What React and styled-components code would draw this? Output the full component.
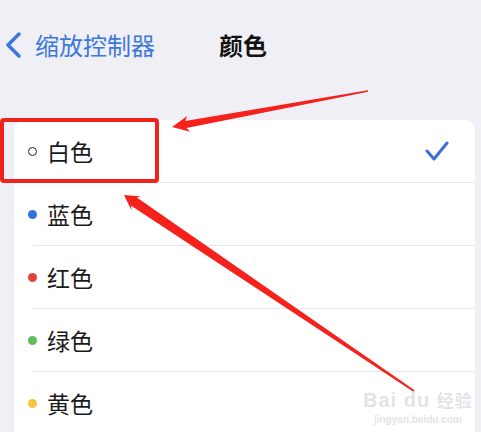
import React from 'react';
import styled, { createGlobalStyle } from 'styled-components';

const GlobalStyle = createGlobalStyle`
  html, body {
    margin: 0;
    padding: 0;
    background: #f0eff5;
  }
  body {
    font-family: "Noto Sans CJK SC", "Noto Sans", sans-serif;
  }
`;

const Screen = styled.div`
  position: relative;
  width: 481px;
  height: 432px;
  overflow: hidden;
  background: #f0eff5;
`;

const NavBar = styled.div`
  display: grid;
  grid-template-columns: 1fr auto 1fr;
  align-items: center;
  height: 90px;
  padding: 0 0 0 5px;
`;

const BackButton = styled.div`
  display: flex;
  align-items: center;
  gap: 13px;
  color: #3b78dc;
  font-size: 24px;
  line-height: 1;
`;

const Title = styled.div`
  font-size: 24px;
  font-weight: 700;
  color: #111;
  line-height: 1;
`;

const Card = styled.div`
  margin: 30px 6px 0 14px;
  background: #fff;
  border-radius: 11px 11px 0 0;
  overflow: hidden;
`;

const Row = styled.div`
  display: flex;
  align-items: center;
  height: 63px;
  padding: 0 26px 0 14px;
  position: relative;
  &:not(:last-child)::after {
    content: '';
    position: absolute;
    left: 19px;
    right: 0;
    bottom: 0;
    height: 1.5px;
    background: #e6e6eb;
  }
`;

const Dot = styled.span`
  box-sizing: border-box;
  width: 9px;
  height: 9px;
  border-radius: 50%;
  margin-right: 10px;
  background: ${({ color }) => color};
  border: ${({ hollow }) => (hollow ? '1.5px solid #222' : 'none')};
`;

const Label = styled.span`
  flex: 1;
  font-size: 23px;
  color: #1a1a1a;
  line-height: 1;
`;

const Highlight = styled.div`
  position: absolute;
  left: 0;
  top: 118px;
  width: 151px;
  height: 57px;
  border: 4px solid #f0221c;
  border-radius: 4px;
`;

const Overlay = styled.svg`
  position: absolute;
  left: 0;
  top: 0;
  pointer-events: none;
`;

const Watermark = styled.div`
  position: absolute;
  left: 363px;
  top: 390px;
  color: rgba(222, 222, 226, 0.85);
  font-family: "Liberation Sans", Arial, sans-serif;
  text-align: center;
`;

const WmTop = styled.div`
  font-size: 20px;
  font-weight: 700;
  letter-spacing: 1px;
  line-height: 1;
  span {
    font-family: "Noto Sans CJK SC", sans-serif;
    font-size: 17px;
  }
`;

const WmBottom = styled.div`
  font-size: 10px;
  font-weight: 700;
  margin-top: 4px;
`;

const colors = [
  { name: '白色', color: '#fff', hollow: true, checked: true },
  { name: '蓝色', color: '#2f72e2' },
  { name: '红色', color: '#e0453b' },
  { name: '绿色', color: '#5cbf5e' },
  { name: '黄色', color: '#f6c53b' },
];

const Check = () => (
  <svg width="24" height="21" viewBox="0 0 24 21">
    <polyline points="2,10 9,18 22,2" fill="none" stroke="#3a70d8" strokeWidth="3" strokeLinecap="round" strokeLinejoin="round" />
  </svg>
);

const App = () => (
  <Screen>
    <GlobalStyle />
    <NavBar>
      <BackButton>
        <svg width="17" height="26" viewBox="0 0 17 26">
          <polyline points="14,2 3,13 14,24" fill="none" stroke="#3b78dc" strokeWidth="3.4" strokeLinecap="round" strokeLinejoin="round" />
        </svg>
        缩放控制器
      </BackButton>
      <Title>颜色</Title>
      <div />
    </NavBar>
    <Card>
      {colors.map((c) => (
        <Row key={c.name}>
          <Dot color={c.color} hollow={c.hollow} />
          <Label>{c.name}</Label>
          {c.checked && <Check />}
        </Row>
      ))}
    </Card>
    <Highlight />
    <Watermark>
      <WmTop>Bai du <span>经验</span></WmTop>
      <WmBottom>jingyan.baidu.com</WmBottom>
    </Watermark>
    <Overlay width="481" height="432" viewBox="0 0 481 432">
      <polygon points="172,127 187.2,116 185.2,121.1 367.9,90.2 368.1,91.8 186.4,127.9 190.2,131.8" fill="#f5221c" />
      <polygon points="124,195 141.2,196.4 136.8,197.6 414.6,390.2 413.4,391.8 131.2,205.8 131.6,210.4" fill="#f5221c" />
    </Overlay>
  </Screen>
);

export default App;
